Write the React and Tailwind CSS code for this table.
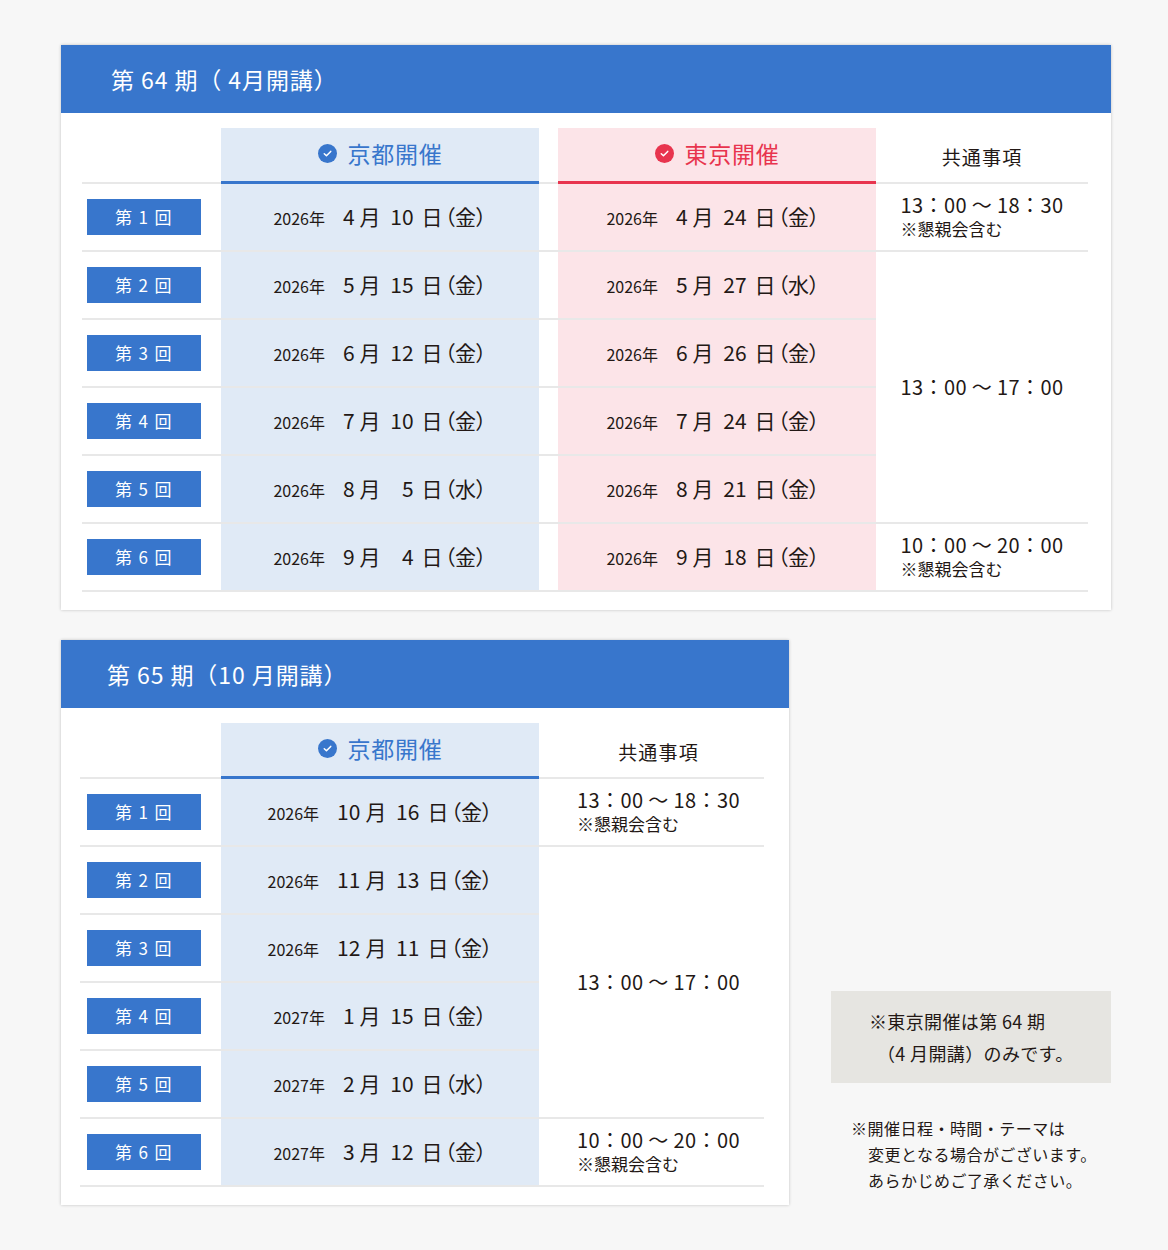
import React from "react";

const BLUE = "#3876cc";

const term64 = [
  { k: { y: "2026", m: "4", d: "10", w: "金" }, t: { y: "2026", m: "4", d: "24", w: "金" } },
  { k: { y: "2026", m: "5", d: "15", w: "金" }, t: { y: "2026", m: "5", d: "27", w: "水" } },
  { k: { y: "2026", m: "6", d: "12", w: "金" }, t: { y: "2026", m: "6", d: "26", w: "金" } },
  { k: { y: "2026", m: "7", d: "10", w: "金" }, t: { y: "2026", m: "7", d: "24", w: "金" } },
  { k: { y: "2026", m: "8", d: "5", w: "水" }, t: { y: "2026", m: "8", d: "21", w: "金" } },
  { k: { y: "2026", m: "9", d: "4", w: "金" }, t: { y: "2026", m: "9", d: "18", w: "金" } },
];

const term65 = [
  { y: "2026", m: "10", d: "16", w: "金" },
  { y: "2026", m: "11", d: "13", w: "金" },
  { y: "2026", m: "12", d: "11", w: "金" },
  { y: "2027", m: "1", d: "15", w: "金" },
  { y: "2027", m: "2", d: "10", w: "水" },
  { y: "2027", m: "3", d: "12", w: "金" },
];

const CheckCircle = ({ color }) => (
  <svg width="19" height="19" viewBox="0 0 20 20" className="shrink-0">
    <circle cx="10" cy="10" r="10" fill={color} />
    <path d="M6.6 10.2l2.3 2.2 4.5-4.6" fill="none" stroke="#fff" strokeWidth="1.6" strokeLinecap="round" strokeLinejoin="round" />
  </svg>
);

const Badge = ({ n }) => (
  <div className="w-[114px] h-[36px] bg-[#3876cc] text-white text-[17px] flex items-center justify-center tracking-[0.08em]">
    第 {n} 回
  </div>
);

const DateText = ({ date }) => (
  <div className="flex items-baseline text-[#231815] [font-feature-settings:'palt']">
    <span className="text-[16px]">{date.y}年</span>
    <span className="text-[21px] ml-[18px]">{date.m}</span>
    <span className="text-[21px] ml-[5px]">月</span>
    <span className="text-[21px] inline-block w-[33px] text-right">{date.d}</span>
    <span className="text-[21px] ml-[8px]">日</span>
    <span className="text-[21px] ml-[2px]">（{date.w}）</span>
  </div>
);

const Time = ({ time, note }) => (
  <div className="text-left text-[#231815]">
    <div className="text-[20px] leading-[24px] tracking-[0.02em]">{time}</div>
    {note && <div className="text-[17px] leading-[24px]">※懇親会含む</div>}
  </div>
);

const CardHeader = ({ title, pl }) => (
  <div className={`h-[68px] bg-[#3876cc] flex items-center text-white text-[23px] tracking-[0.04em] ${pl}`}>
    {title}
  </div>
);

const line = "border-b-2 border-[rgba(0,0,0,0.09)]";

const VenueHead = ({ label, color, bg, border }) => (
  <div className={`w-[318px] ${bg} border-b-[3px] ${border} flex items-center justify-center gap-[11px] pb-[3px] text-[23px] tracking-[0.03em]`} style={{ color }}>
    <CheckCircle color={color} />
    {label}
  </div>
);

const CommonColumn = ({ width, extra }) => (
  <div className={`flex flex-col ${width} ${extra}`}>
    <div className={`h-[56px] ${line} flex items-center justify-center pt-[4px] text-[19px] tracking-[0.06em] text-[#231815]`}>
      共通事項
    </div>
    <div className={`h-[68px] ${line} flex items-center justify-center`}>
      <Time time="13：00 〜 18：30" note />
    </div>
    <div className={`h-[272px] ${line} flex items-center justify-center`}>
      <Time time="13：00 〜 17：00" />
    </div>
    <div className={`h-[68px] ${line} flex items-center justify-center`}>
      <Time time="10：00 〜 20：00" note />
    </div>
  </div>
);

const Card64 = () => (
  <div className="w-[1050px] bg-white shadow-[0_0_3px_rgba(0,0,0,0.22)]">
    <CardHeader title="第 64 期（ 4月開講）" pl="pl-[50px]" />
    <div className="flex pt-[15px] pb-[18px] pl-[21px]">
      <div className="flex flex-col">
        <div className="flex h-[56px]">
          <div className={`w-[139px] ${line}`} />
          <VenueHead label="京都開催" color={BLUE} bg="bg-[#e0eaf6]" border="border-[#3876cc]" />
          <div className={`w-[19px] ${line}`} />
          <VenueHead label="東京開催" color="#e8344e" bg="bg-[#fce4e8]" border="border-[#e8344e]" />
        </div>
        {term64.map((r, i) => (
          <div key={i} className={`flex h-[68px] ${line}`}>
            <div className="w-[139px] pl-[5px] flex items-center">
              <Badge n={i + 1} />
            </div>
            <div className="w-[318px] bg-[#e0eaf6] flex items-center justify-center">
              <DateText date={r.k} />
            </div>
            <div className="w-[19px]" />
            <div className="w-[318px] bg-[#fce4e8] flex items-center justify-center pr-[8px]">
              <DateText date={r.t} />
            </div>
          </div>
        ))}
      </div>
      <CommonColumn width="w-[212px]" extra="" />
    </div>
  </div>
);

const Card65 = () => (
  <div className="w-[728px] bg-white shadow-[0_0_3px_rgba(0,0,0,0.22)]">
    <CardHeader title="第 65 期（10 月開講）" pl="pl-[46px]" />
    <div className="flex pt-[15px] pb-[18px] pl-[19px]">
      <div className="flex flex-col">
        <div className="flex h-[56px]">
          <div className={`w-[141px] ${line}`} />
          <VenueHead label="京都開催" color={BLUE} bg="bg-[#e0eaf6]" border="border-[#3876cc]" />
        </div>
        {term65.map((d, i) => (
          <div key={i} className={`flex h-[68px] ${line}`}>
            <div className="w-[141px] pl-[7px] flex items-center">
              <Badge n={i + 1} />
            </div>
            <div className="w-[318px] bg-[#e0eaf6] flex items-center justify-center">
              <DateText date={d} />
            </div>
          </div>
        ))}
      </div>
      <CommonColumn width="w-[225px]" extra="[&>div]:pl-[14px]" />
    </div>
  </div>
);

export default function App() {
  return (
    <main
      className="w-full min-h-[1250px] bg-[#f7f7f7] pt-[45px] pl-[61px] text-[#231815]"
      style={{ fontFamily: '"Noto Sans CJK JP", "Noto Sans", sans-serif' }}
    >
      <Card64 />
      <section className="flex items-end gap-[42px] mt-[30px]">
        <Card65 />
        <div className="w-[280px] pb-[12px]">
          <div className="bg-[#e6e5e1] py-[14px] pl-[38px] text-[18px] leading-[32px] tracking-[0.02em] text-[#231815]">
            <div>※東京開催は第 64 期</div>
            <div className="pl-[8px]">（4 月開講）のみです。</div>
          </div>
          <div className="mt-[32px] ml-[20px] pl-[17px] text-[16px] leading-[26px] tracking-[0.03em] text-[#231815]">
            <div className="-ml-[17px]">※開催日程・時間・テーマは</div>
            <div>変更となる場合がございます。</div>
            <div>あらかじめご了承ください。</div>
          </div>
        </div>
      </section>
    </main>
  );
}
